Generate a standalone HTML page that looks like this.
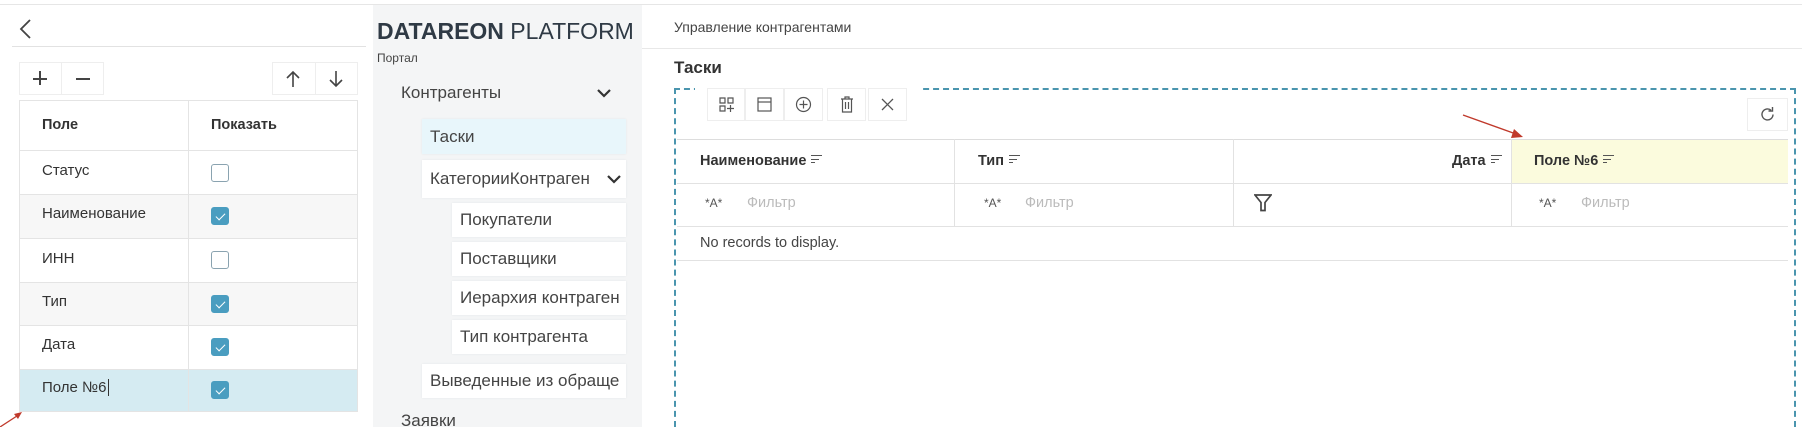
<!DOCTYPE html>
<html style="overflow:hidden;height:427px"><head><meta charset="utf-8"><style>
*{box-sizing:border-box;margin:0;padding:0}
body{width:1802px;height:427px;overflow:hidden;background:#fff;font-family:"Liberation Sans","Noto Sans CJK SC",sans-serif;color:#333;position:relative}
.a{position:absolute}
.t{font-size:15px;color:#333}
.cb{position:absolute;left:211px;width:18px;height:18px;border:1px solid #8aa3b0;border-radius:3px;background:#fff}
.cb.on{background:#4a9dc0;border-color:#4a9dc0}
.cb.on:after{content:"";position:absolute;left:6px;top:3px;width:4px;height:8px;border:solid #fff;border-width:0 1.5px 1.5px 0;transform:rotate(45deg)}
.nav{position:absolute;background:#fff;font-size:17px;color:#444;padding-left:8px;display:flex;align-items:center;box-shadow:0 0 2px #e4e6e8;white-space:nowrap;overflow:hidden}
.tb{position:absolute;top:88px;height:33px;border:1px solid #eee;display:flex;align-items:center;justify-content:center}
.hd{position:absolute;top:153px;font-size:14.5px;font-weight:bold;color:#333}
.sort{display:inline-block;width:11px;height:9px;margin-left:5px;vertical-align:1px;background:linear-gradient(#555,#555) 0 0/11px 1.4px no-repeat,linear-gradient(#555,#555) 0 3.5px/8px 1.4px no-repeat,linear-gradient(#555,#555) 0 7px/4px 1.4px no-repeat}
.fa{position:absolute;top:196px;font-size:12px;color:#555}
.ff{position:absolute;top:195px;font-size:14.5px;color:#bbb}
</style></head><body>
<div class="a" style="left:0;top:4px;width:1802px;height:1px;background:#e6e6e6"></div>
<svg class="a" style="left:19px;top:19px" width="13" height="20"><path d="M11 1 L2 10 L11 19" fill="none" stroke="#444" stroke-width="1.8"/></svg>
<div class="a" style="left:12px;top:46px;width:354px;height:1px;background:#e2e2e2"></div>
<div class="a" style="left:19px;top:62px;width:85px;height:33px;border:1px solid #eee"></div>
<div class="a" style="left:61px;top:62px;width:1px;height:33px;background:#eee"></div>
<div class="a" style="left:33px;top:78px;width:14px;height:1.6px;background:#444"></div>
<div class="a" style="left:39.2px;top:71px;width:1.6px;height:14px;background:#444"></div>
<div class="a" style="left:76px;top:78px;width:14px;height:1.6px;background:#444"></div>
<div class="a" style="left:272px;top:62px;width:86px;height:33px;border:1px solid #eee"></div>
<div class="a" style="left:315px;top:62px;width:1px;height:33px;background:#eee"></div>
<svg class="a" style="left:285px;top:70px" width="16" height="18"><path d="M8 17V2 M2 8 L8 2 L14 8" fill="none" stroke="#444" stroke-width="1.6"/></svg>
<svg class="a" style="left:328px;top:70px" width="16" height="18"><path d="M8 1V16 M2 10 L8 16 L14 10" fill="none" stroke="#444" stroke-width="1.6"/></svg>
<div class="a" style="left:19px;top:100px;width:339px;height:312px;border:1px solid #e4e4e4"></div>
<div class="a" style="left:20px;top:194px;width:337px;height:44px;background:#f7f7f7"></div>
<div class="a" style="left:20px;top:282px;width:337px;height:43px;background:#f7f7f7"></div>
<div class="a" style="left:20px;top:369px;width:337px;height:42px;background:#d5ebf2"></div>
<div class="a" style="left:188px;top:100px;width:1px;height:312px;background:#e4e4e4"></div>
<div class="a" style="left:19px;top:150px;width:339px;height:1px;background:#e4e4e4"></div>
<div class="a" style="left:19px;top:194px;width:339px;height:1px;background:#e4e4e4"></div>
<div class="a" style="left:19px;top:238px;width:339px;height:1px;background:#e4e4e4"></div>
<div class="a" style="left:19px;top:282px;width:339px;height:1px;background:#e4e4e4"></div>
<div class="a" style="left:19px;top:325px;width:339px;height:1px;background:#e4e4e4"></div>
<div class="a" style="left:19px;top:369px;width:339px;height:1px;background:#e4e4e4"></div>
<div class="a t" style="left:42px;top:117px;font-weight:bold;font-size:14.5px">Поле</div>
<div class="a t" style="left:211px;top:117px;font-weight:bold;font-size:14.5px">Показать</div>
<div class="a t" style="left:42px;top:162px">Статус</div><div class="cb" style="top:164px"></div>
<div class="a t" style="left:42px;top:205px">Наименование</div><div class="cb on" style="top:207px"></div>
<div class="a t" style="left:42px;top:250px">ИНН</div><div class="cb" style="top:251px"></div>
<div class="a t" style="left:42px;top:293px">Тип</div><div class="cb on" style="top:295px"></div>
<div class="a t" style="left:42px;top:336px">Дата</div><div class="cb on" style="top:338px"></div>
<div class="a t" style="left:42px;top:379px">Поле №6<span style="border-left:1px solid #333;margin-left:1px"></span></div><div class="cb on" style="top:381px"></div>
<svg class="a" style="left:0;top:405px" width="30" height="22"><path d="M0 22 L20 9" stroke="#c0392b" stroke-width="1.3"/><path d="M22 7 L14 9 L18 14Z" fill="#c0392b"/></svg>
<div class="a" style="left:373px;top:5px;width:269px;height:422px;background:#f4f5f6"></div>
<div class="a" style="left:377px;top:18px;font-size:23px;color:#2f3a45;white-space:nowrap"><b>DATAREON</b> PLATFORM</div>
<div class="a" style="left:377px;top:51px;font-size:12px;color:#444">Портал</div>
<div class="a" style="left:401px;top:83px;font-size:17px;color:#444">Контрагенты</div>
<svg class="a" style="left:596px;top:88px" width="16" height="11"><path d="M2 2 L8 8 L14 2" fill="none" stroke="#333" stroke-width="2.2"/></svg>
<div class="nav" style="left:422px;top:119px;width:204px;height:35px;background:#e8f6fb">Таски</div>
<div class="nav" style="left:422px;top:160px;width:204px;height:38px">КатегорииКонтраген<svg style="position:absolute;left:184px;top:14px" width="16" height="11"><path d="M2 2 L8 8 L14 2" fill="none" stroke="#333" stroke-width="2.2"/></svg></div>
<div class="nav" style="left:452px;top:203px;width:174px;height:34px">Покупатели</div>
<div class="nav" style="left:452px;top:242px;width:174px;height:34px">Поставщики</div>
<div class="nav" style="left:452px;top:281px;width:174px;height:34px">Иерархия контраген</div>
<div class="nav" style="left:452px;top:320px;width:174px;height:34px">Тип контрагента</div>
<div class="nav" style="left:422px;top:364px;width:204px;height:34px">Выведенные из обраще</div>
<div class="a" style="left:401px;top:411px;font-size:17px;color:#444;height:16px;overflow:hidden">Заявки</div>
<div class="a" style="left:674px;top:19px;font-size:14px;color:#444">Управление контрагентами</div>
<div class="a" style="left:642px;top:48px;width:1160px;height:1px;background:#e8e8e8"></div>
<div class="a" style="left:674px;top:58px;font-size:17px;font-weight:bold;color:#333">Таски</div>
<div class="a" style="left:674px;top:88px;width:1122px;height:339px;border:2.5px dashed #4a95ae;border-bottom:none"></div>
<div class="a" style="left:695px;top:84px;width:225px;height:12px;background:#fff"></div>
<div class="tb" style="left:707px;width:38px"><svg width="15" height="15"><path d="M1 1h5v5H1z M9 1h5v5H9z M1 9h5v5H1z M11.5 8v7 M8 11.5h7" fill="none" stroke="#555" stroke-width="1.2"/></svg></div>
<div class="tb" style="left:745px;width:39px"><svg width="15" height="15"><rect x="1" y="1" width="13" height="13" fill="none" stroke="#555" stroke-width="1.2"/><path d="M1 5h13" stroke="#555" stroke-width="1.2"/></svg></div>
<div class="tb" style="left:784px;width:39px"><svg width="17" height="17"><circle cx="8.5" cy="8.5" r="7" fill="none" stroke="#555" stroke-width="1.2"/><path d="M8.5 4.5v8 M4.5 8.5h8" stroke="#555" stroke-width="1.2"/></svg></div>
<div class="tb" style="left:827px;width:39px"><svg width="14" height="17"><path d="M1 3h12 M5 3V1h4v2 M2.5 3v13h9V3 M5.5 6v7 M8.5 6v7" fill="none" stroke="#555" stroke-width="1.2"/></svg></div>
<div class="tb" style="left:868px;width:39px"><svg width="13" height="13"><path d="M1 1L12 12M12 1L1 12" stroke="#555" stroke-width="1.3"/></svg></div>
<div class="tb" style="left:1747px;top:98px;width:41px;height:33px"><svg width="17" height="17"><path d="M14 8.5A5.5 5.5 0 1 1 12 4.2 M13.5 1v4h-4" fill="none" stroke="#555" stroke-width="1.4"/></svg></div>
<div class="a" style="left:1511px;top:139px;width:277px;height:44px;background:#fbfbdd"></div>
<div class="a" style="left:677px;top:139px;width:1111px;height:1px;background:#ddd"></div>
<div class="a" style="left:677px;top:183px;width:1111px;height:1px;background:#e2e2e2"></div>
<div class="a" style="left:677px;top:226px;width:1111px;height:1px;background:#e2e2e2"></div>
<div class="a" style="left:677px;top:260px;width:1111px;height:1px;background:#e2e2e2"></div>
<div class="a" style="left:954px;top:139px;width:1px;height:87px;background:#e2e2e2"></div>
<div class="a" style="left:1233px;top:139px;width:1px;height:87px;background:#e2e2e2"></div>
<div class="a" style="left:1511px;top:139px;width:1px;height:87px;background:#e2e2e2"></div>
<div class="hd" style="left:700px">Наименование<span class="sort"></span></div>
<div class="hd" style="left:978px">Тип<span class="sort"></span></div>
<div class="hd" style="left:1452px">Дата<span class="sort"></span></div>
<div class="hd" style="left:1534px">Поле №6<span class="sort"></span></div>
<div class="fa" style="left:705px">*A*</div><div class="ff" style="left:747px">Фильтр</div>
<div class="fa" style="left:984px">*A*</div><div class="ff" style="left:1025px">Фильтр</div>
<svg class="a" style="left:1254px;top:194px" width="18" height="18"><path d="M1 1h16L11 8.5v8h-4v-8z" fill="none" stroke="#444" stroke-width="1.7"/></svg>
<div class="fa" style="left:1539px">*A*</div><div class="ff" style="left:1581px">Фильтр</div>
<div class="a" style="left:700px;top:235px;font-size:14.5px;color:#444">No records to display.</div>
<svg class="a" style="left:1460px;top:112px" width="70" height="30"><path d="M3 3 L56 22" stroke="#c0392b" stroke-width="1.4"/><path d="M63 25 L51 26 L54 17Z" fill="#c0392b"/></svg>
</body></html>
